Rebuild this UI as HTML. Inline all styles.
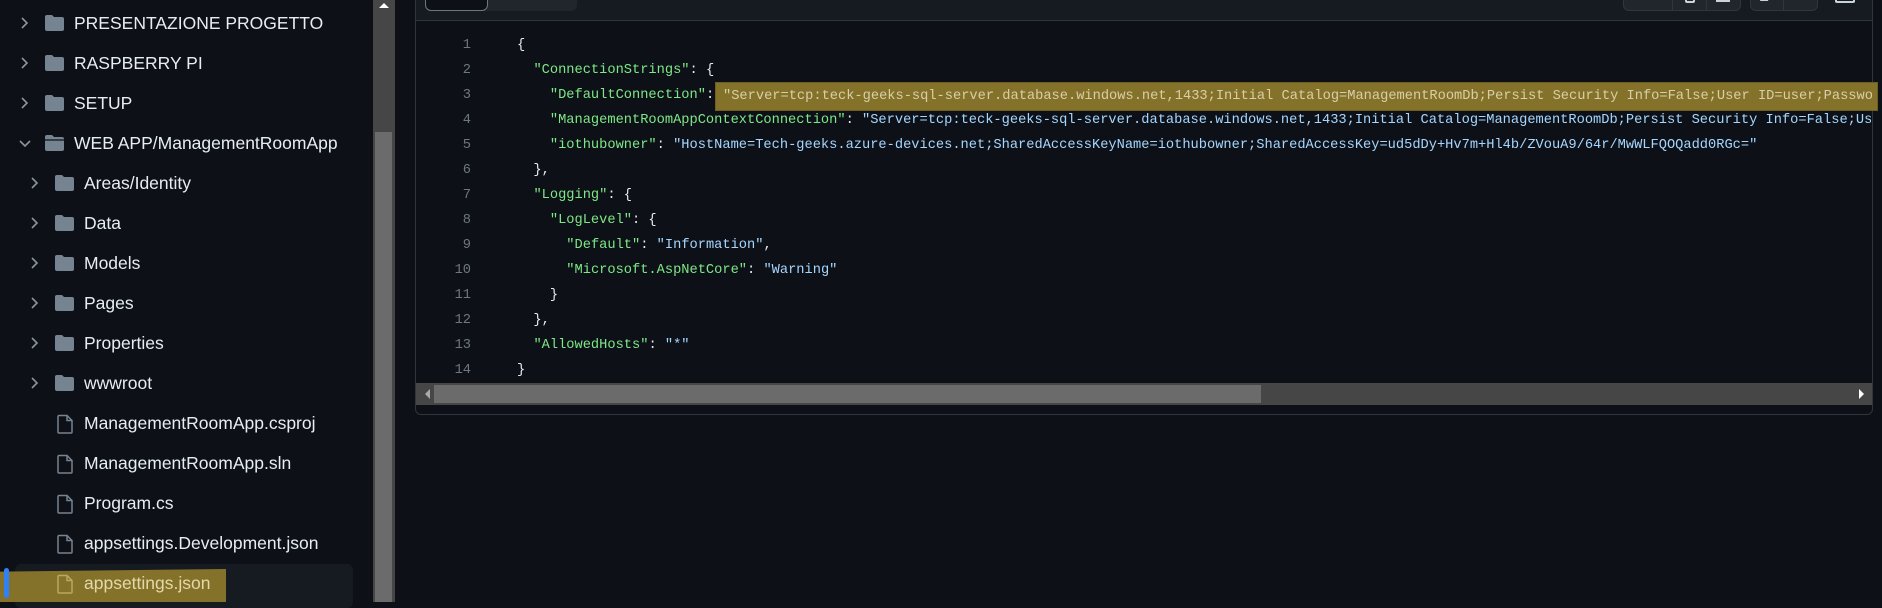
<!DOCTYPE html>
<html><head><meta charset="utf-8"><style>
*{margin:0;padding:0;box-sizing:border-box}
body{width:1882px;height:602px;background:#0d1117;overflow:hidden;position:relative;font-family:"Liberation Sans",sans-serif}
.row{position:absolute;height:40px;line-height:40px;color:#e6edf3;font-size:17.5px;white-space:nowrap}
.ic{position:absolute}
.code{position:absolute;left:0;font-family:"Liberation Mono",monospace;font-size:13.7px;white-space:pre;height:25px;line-height:25px;color:#e6edf3}
.ln{position:absolute;width:50px;text-align:right;left:421px;color:#6e7681}
.k{color:#7ee787}.s{color:#a5d6ff}
</style></head><body>
<div style="position:absolute;left:15px;top:564px;width:338px;height:44px;background:#161b22;border-radius:6px"></div>
<div style="position:absolute;left:0;top:569px;width:226px;height:33px;background:#85722a;clip-path:polygon(0 8%,100% 0,100% 100%,0 100%)"></div>
<div style="position:absolute;left:4px;top:568px;width:5px;height:30px;background:#2f81f7;border-radius:3px"></div>
<div id="side"></div>
<div style="position:absolute;left:373px;top:0;width:22px;height:602px;background:#464646"></div>
<div style="position:absolute;left:375px;top:132px;width:17px;height:470px;background:#6b6b6b"></div>
<div style="position:absolute;left:379px;top:3px;width:0;height:0;border-left:5px solid transparent;border-right:5px solid transparent;border-bottom:5px solid #fff"></div>
<div style="position:absolute;left:415px;top:-10px;width:1458px;height:425px;border:1px solid #30363d;border-radius:6px"></div>
<div style="position:absolute;left:416px;top:0;width:1456px;height:21px;background:#161b22;border-bottom:1px solid #30363d"></div>
<div style="position:absolute;left:425px;top:-10px;width:152px;height:21px;background:#21262d;border-radius:6px"></div>
<div style="position:absolute;left:425px;top:-10px;width:63px;height:21px;background:#0d1117;border:1px solid #6e7681;border-radius:6px"></div>
<div style="position:absolute;left:1623px;top:-10px;width:118px;height:21px;background:#21262d;border:1px solid #30363d;border-radius:6px"></div>
<div style="position:absolute;left:1672px;top:-10px;width:1px;height:21px;background:#30363d"></div>
<div style="position:absolute;left:1706px;top:-10px;width:1px;height:21px;background:#30363d"></div>
<div style="position:absolute;left:1685px;top:-5px;width:10px;height:8px;border:2px solid #c9d1d9;border-radius:2px"></div>
<div style="position:absolute;left:1716px;top:-2px;width:14px;height:4px;border-bottom:2px solid #c9d1d9"></div>
<div style="position:absolute;left:1750px;top:-10px;width:68px;height:21px;background:#21262d;border:1px solid #30363d;border-radius:6px"></div>
<div style="position:absolute;left:1783px;top:-10px;width:1px;height:21px;background:#30363d"></div>
<div style="position:absolute;left:1761px;top:-3px;width:8px;height:4px;background:#c9d1d9;transform:skewX(-30deg)"></div>
<div style="position:absolute;left:1835px;top:-5px;width:20px;height:8px;border:2px solid #c9d1d9;border-top:none;border-radius:2px"></div>
<div id="code"></div>
<div style="position:absolute;left:715px;top:82px;width:1163px;height:29px;background:#85722a;border:1px solid #6e5e22"></div>
<div class="code s" style="left:723px;top:84px;width:1150px;overflow:hidden;color:#d8cfa8">"Server=tcp:teck-geeks-sql-server.database.windows.net,1433;Initial Catalog=ManagementRoomDb;Persist Security Info=False;User ID=user;Password</div>
<div style="position:absolute;left:416px;top:383px;width:1456px;height:22px;background:#464646"></div>
<div style="position:absolute;left:434px;top:385px;width:827px;height:18px;background:#6b6b6b"></div>
<div style="position:absolute;left:425px;top:389px;width:0;height:0;border-top:5px solid transparent;border-bottom:5px solid transparent;border-right:5px solid #aaa"></div>
<div style="position:absolute;left:1859px;top:389px;width:0;height:0;border-top:5px solid transparent;border-bottom:5px solid transparent;border-left:5px solid #fff"></div>
<script>
var items=[[0,1,"PRESENTAZIONE PROGETTO"],[0,1,"RASPBERRY PI"],[0,1,"SETUP"],[0,2,"WEB APP/ManagementRoomApp"],[1,1,"Areas/Identity"],[1,1,"Data"],[1,1,"Models"],[1,1,"Pages"],[1,1,"Properties"],[1,1,"wwwroot"],[1,0,"ManagementRoomApp.csproj"],[1,0,"ManagementRoomApp.sln"],[1,0,"Program.cs"],[1,0,"appsettings.Development.json"],[1,0,"appsettings.json"]];
var h="";
items.forEach(function(it,i){
 var top=3+i*40,lv=it[0]*10;
 if(it[1]>0){
  var cx=20+lv;
  if(it[1]==1) h+='<svg class="ic" style="left:'+cx+'px;top:'+(top+14)+'px" width="10" height="12"><path d="M2 1l5 5-5 5" stroke="#8b949e" stroke-width="1.6" fill="none"/></svg>';
  else h+='<svg class="ic" style="left:'+(cx-1)+'px;top:'+(top+16)+'px" width="12" height="10"><path d="M1 2l5 5 5-5" stroke="#8b949e" stroke-width="1.6" fill="none"/></svg>';
  h+='<svg class="ic" style="left:'+(44+lv)+'px;top:'+(top+11)+'px" width="21" height="18"><path d="M1 3a2 2 0 0 1 2-2h5l2 2h8a2 2 0 0 1 2 2v10a2 2 0 0 1-2 2H3a2 2 0 0 1-2-2z" fill="#768390"/>'+(it[1]==2?'<path d="M1 6h19" stroke="#0d1117" stroke-width="1.2"/>':'')+'</svg>';
 } else {
  h+='<svg class="ic" style="left:57px;top:'+(top+11)+'px" width="17" height="20"><path d="M2 1.5h8l5 5v11.5a1 1 0 0 1-1 1H2a1 1 0 0 1-1-1V2.5a1 1 0 0 1 1-1zM10 1.5v5h5" stroke="'+(i==14?'#b9a860':'#768390')+'" stroke-width="1.5" fill="none"/></svg>';
 }
 h+='<div class="row" style="left:'+(74+lv)+'px;top:'+top+'px'+(i==14?';color:#e3d9a8':'')+'">'+it[2]+'</div>';
});
document.getElementById('side').innerHTML=h;
var L=[
'{',
'  <span class="k">"ConnectionStrings"</span>: {',
'    <span class="k">"DefaultConnection"</span>: ',
'    <span class="k">"ManagementRoomAppContextConnection"</span>: <span class="s">"Server=tcp:teck-geeks-sql-server.database.windows.net,1433;Initial Catalog=ManagementRoomDb;Persist Security Info=False;User ID=user;Password</span>',
'    <span class="k">"iothubowner"</span>: <span class="s">"HostName=Tech-geeks.azure-devices.net;SharedAccessKeyName=iothubowner;SharedAccessKey=ud5dDy+Hv7m+Hl4b/ZVouA9/64r/MwWLFQOQadd0RGc="</span>',
'  },',
'  <span class="k">"Logging"</span>: {',
'    <span class="k">"LogLevel"</span>: {',
'      <span class="k">"Default"</span>: <span class="s">"Information"</span>,',
'      <span class="k">"Microsoft.AspNetCore"</span>: <span class="s">"Warning"</span>',
'    }',
'  },',
'  <span class="k">"AllowedHosts"</span>: <span class="s">"*"</span>',
'}'];
var c="";
L.forEach(function(t,i){var top=33+i*25;
 c+='<div class="code ln" style="top:'+top+'px">'+(i+1)+'</div>';
 c+='<div class="code" style="left:517px;top:'+top+'px;width:1354px;overflow:hidden">'+t+'</div>';});
document.getElementById('code').innerHTML=c;
</script>
</body></html>
